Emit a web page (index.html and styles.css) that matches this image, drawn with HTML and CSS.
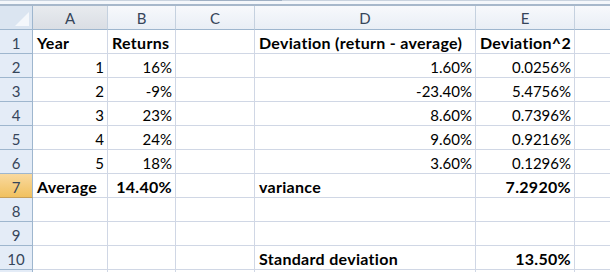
FILE: index.html
```html
<!DOCTYPE html>
<html>
<head>
<meta charset="utf-8">
<link rel="stylesheet" href="styles.css">
</head>
<body>
<div class="topbar"><div class="scroll"></div></div>
<div class="sheet">
  <div class="corner"><span class="tri"></span></div>
  <div class="colh sel">A</div>
  <div class="colh">B</div>
  <div class="colh">C</div>
  <div class="colh">D</div>
  <div class="colh">E</div>
  <div class="colh last"></div>

  <div class="rowh">1</div>
  <div class="c b">Year</div>
  <div class="c b">Returns</div>
  <div class="c"></div>
  <div class="c b">Deviation (return - average)</div>
  <div class="c b">Deviation^2</div>
  <div class="c last"></div>

  <div class="rowh">2</div>
  <div class="c r">1</div>
  <div class="c r">16%</div>
  <div class="c"></div>
  <div class="c r">1.60%</div>
  <div class="c r">0.0256%</div>
  <div class="c last"></div>

  <div class="rowh">3</div>
  <div class="c r">2</div>
  <div class="c r">-9%</div>
  <div class="c"></div>
  <div class="c r">-23.40%</div>
  <div class="c r">5.4756%</div>
  <div class="c last"></div>

  <div class="rowh">4</div>
  <div class="c r">3</div>
  <div class="c r">23%</div>
  <div class="c"></div>
  <div class="c r">8.60%</div>
  <div class="c r">0.7396%</div>
  <div class="c last"></div>

  <div class="rowh">5</div>
  <div class="c r">4</div>
  <div class="c r">24%</div>
  <div class="c"></div>
  <div class="c r">9.60%</div>
  <div class="c r">0.9216%</div>
  <div class="c last"></div>

  <div class="rowh">6</div>
  <div class="c r">5</div>
  <div class="c r">18%</div>
  <div class="c"></div>
  <div class="c r">3.60%</div>
  <div class="c r">0.1296%</div>
  <div class="c last"></div>

  <div class="rowh active">7</div>
  <div class="c b">Average</div>
  <div class="c b r">14.40%</div>
  <div class="c"></div>
  <div class="c b">variance</div>
  <div class="c b r">7.2920%</div>
  <div class="c last"></div>

  <div class="rowh">8</div>
  <div class="c"></div>
  <div class="c"></div>
  <div class="c"></div>
  <div class="c"></div>
  <div class="c"></div>
  <div class="c last"></div>

  <div class="rowh">9</div>
  <div class="c"></div>
  <div class="c"></div>
  <div class="c"></div>
  <div class="c"></div>
  <div class="c"></div>
  <div class="c last"></div>

  <div class="rowh">10</div>
  <div class="c"></div>
  <div class="c"></div>
  <div class="c"></div>
  <div class="c b">Standard deviation</div>
  <div class="c b r">13.50%</div>
  <div class="c last"></div>

  <div class="rowh"></div>
  <div class="c"></div>
  <div class="c"></div>
  <div class="c"></div>
  <div class="c"></div>
  <div class="c"></div>
  <div class="c last"></div>
</div>
</body>
</html>
```
FILE: styles.css
```css
html, body {
  margin: 0;
  padding: 0;
  background: #ffffff;
  overflow: hidden;
}
body {
  width: 610px;
  height: 272px;
  font-family: Lato, "Liberation Sans", sans-serif;
}
.topbar {
  height: 6px;
  box-sizing: border-box;
  background: #f4f7fb;
  border-top: 1px solid #c9d3df;
  border-bottom: 2px solid #a7b8cb;
  position: relative;
}
.scroll {
  position: absolute;
  left: 190px;
  top: -1px;
  width: 92px;
  height: 1px;
  background: #9fb0c4;
}
.sheet {
  display: grid;
  grid-template-columns: 33px 75px 68px 79px 221px 99px 65px;
  grid-template-rows: 24px repeat(11, 24px);
  height: 266px;
  overflow: hidden;
}
.corner {
  background: #dbe5f1;
  border-right: 1px solid #9eb6ce;
  border-bottom: 1px solid #9eb6ce;
  box-sizing: border-box;
  position: relative;
}
.tri {
  position: absolute;
  right: 3px;
  bottom: 3px;
  width: 0;
  height: 0;
  border-left: 14px solid transparent;
  border-bottom: 14px solid #f4f7fb;
}
.colh {
  box-sizing: border-box;
  border-right: 1px solid #c5d1df;
  border-bottom: 1px solid #9eb6ce;
  background: linear-gradient(#f7f9fc, #e9eef5);
  color: #36455a;
  font-size: 15px;
  text-align: center;
  line-height: 24px;
}
.colh.sel {
  background: linear-gradient(#e8ebef, #dadee4);
}
.colh.last {
  border-right: none;
}
.rowh {
  box-sizing: border-box;
  background: #e4ecf7;
  border-right: 1px solid #9eb6ce;
  border-bottom: 1px solid #9eb6ce;
  color: #36455a;
  font-size: 15px;
  text-align: center;
  line-height: 26px;
}
.rowh.active {
  background: linear-gradient(#f9d99f, #f1c15f);
  border-bottom-color: #c7a05a;
}
.c {
  box-sizing: border-box;
  border-right: 1px solid #d0d7e5;
  border-bottom: 1px solid #d0d7e5;
  color: #000000;
  font-size: 15px;
  line-height: 27px;
  padding: 0 3px 0 4px;
  white-space: nowrap;
  overflow: visible;
}
.c.last {
  border-right: none;
}
.b {
  font-weight: 700;
  font-size: 16px;
  letter-spacing: 0.3px;
  line-height: 26px;
}
.r {
  text-align: right;
}
```
